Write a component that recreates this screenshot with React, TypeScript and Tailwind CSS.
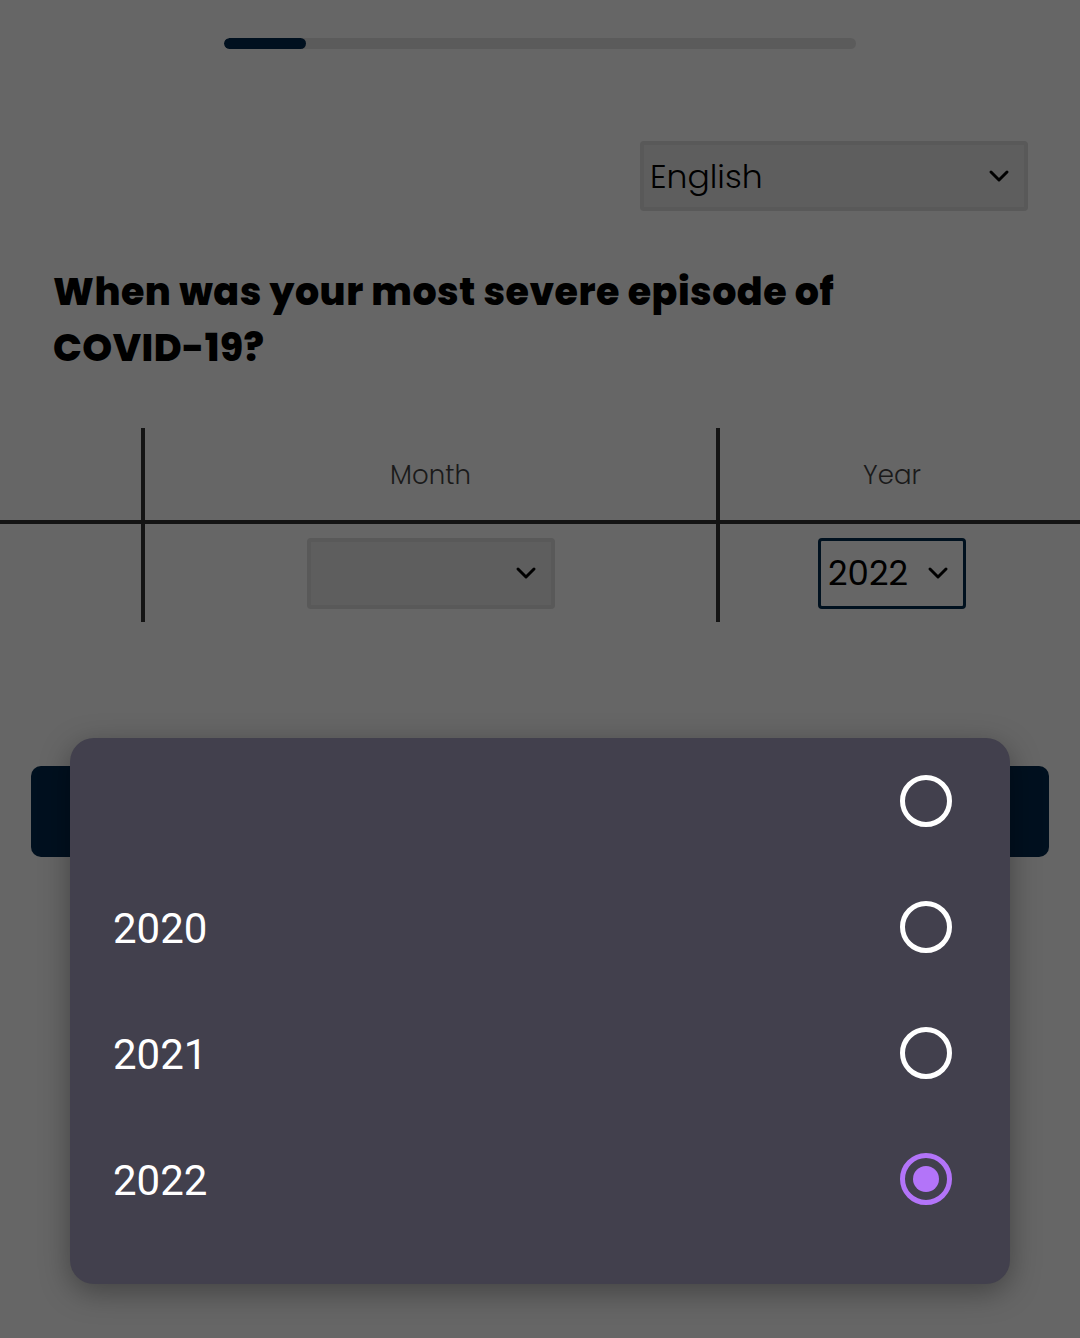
import React from 'react'

/**
 * Survey step: "most severe episode" date picker, with the native year
 * picker dialog open over the page (page dimmed behind it).
 */

const YEARS = ['', '2020', '2021', '2022']

function Chevron({ className }: { className?: string }): React.JSX.Element {
  return (
    <svg viewBox="0 0 22 14" className={className} fill="none" stroke="currentColor" strokeWidth={3} strokeLinecap="round" strokeLinejoin="round">
      <path d="M3 3l8 8 8-8" />
    </svg>
  )
}

function Radio({ checked }: { checked: boolean }): React.JSX.Element {
  return checked ? (
    <span className="flex h-[52px] w-[52px] items-center justify-center rounded-full border-[5px] border-[#b374f9]">
      <span className="h-[26px] w-[26px] rounded-full bg-[#b374f9]" />
    </span>
  ) : (
    <span className="block h-[52px] w-[52px] rounded-full border-[5px] border-white" />
  )
}

export default function App(): React.JSX.Element {
  const selected = '2022'
  return (
    <div className="relative h-[1338px] w-[1080px] overflow-hidden bg-[#666666] font-['Poppins','Inter',sans-serif] text-black">
      {/* progress */}
      <div className="flex justify-center pt-[38px]">
        <div className="h-[11px] w-[632px] overflow-hidden rounded-full bg-[#5b5b5b]">
          <div className="h-full w-[82px] rounded-full bg-[#00101f]" />
        </div>
      </div>

      {/* language */}
      <div className="mt-[92px] flex justify-end pr-[52px]">
        <div className="flex h-[70px] w-[388px] items-center justify-between rounded-[4px] border-4 border-[#595959] bg-[#5e5e5e] pl-[6px] pr-[14px]">
          <span className="text-[33px] font-light leading-none">English</span>
          <Chevron className="h-[14px] w-[22px]" />
        </div>
      </div>

      <h1 className="mt-[53px] pl-[53px] pr-[180px] text-[38px] font-extrabold leading-[56px] tracking-[0.5px]">
        When was your most severe episode of COVID-19?
      </h1>

      {/* date table */}
      <div className="mt-[52px]">
        <div className="flex h-[92px]">
          <div className="w-[141px]" />
          <div className="flex w-[575px] items-center justify-center border-l-4 border-[#141414] pt-[3px] text-[26px] font-light text-[#1a1a1a]">Month</div>
          <div className="flex w-[348px] items-center justify-center border-l-4 border-[#141414] pt-[3px] text-[26px] font-light text-[#1a1a1a]">Year</div>
        </div>
        <div className="h-[4px] bg-[#141414]" />
        <div className="flex h-[98px]">
          <div className="w-[141px]" />
          <div className="flex w-[575px] items-center justify-center border-l-4 border-[#141414]">
            <div className="flex h-[71px] w-[248px] items-center justify-end rounded-[4px] border-4 border-[#595959] bg-[#5e5e5e] pr-[14px]">
              <Chevron className="h-[14px] w-[22px]" />
            </div>
          </div>
          <div className="flex w-[348px] items-center justify-center border-l-4 border-[#141414]">
            <div className="flex h-[71px] w-[148px] items-center justify-between rounded-[4px] border-[3px] border-[#00111f] pl-[7px] pr-[14px]">
              <span className="text-[34px] leading-none">2022</span>
              <Chevron className="h-[14px] w-[22px]" />
            </div>
          </div>
        </div>
      </div>

      {/* next button (behind dialog) */}
      <div className="mx-[31px] mt-[144px] h-[91px] rounded-[10px] bg-[#00101f]" />

      {/* year picker dialog */}
      <div className="absolute left-[70px] top-[738px] w-[940px] rounded-[24px] bg-[#42404d] pb-[42px] shadow-[0_8px_30px_rgba(0,0,0,0.35)] font-['Roboto',sans-serif]">
        {YEARS.map((y) => (
          <div key={y || 'none'} className="flex h-[126px] items-center justify-between pl-[43px] pr-[58px]">
            <span className="pt-[4px] text-[42px] leading-none text-white">{y}</span>
            <Radio checked={y === selected} />
          </div>
        ))}
      </div>
    </div>
  )
}
